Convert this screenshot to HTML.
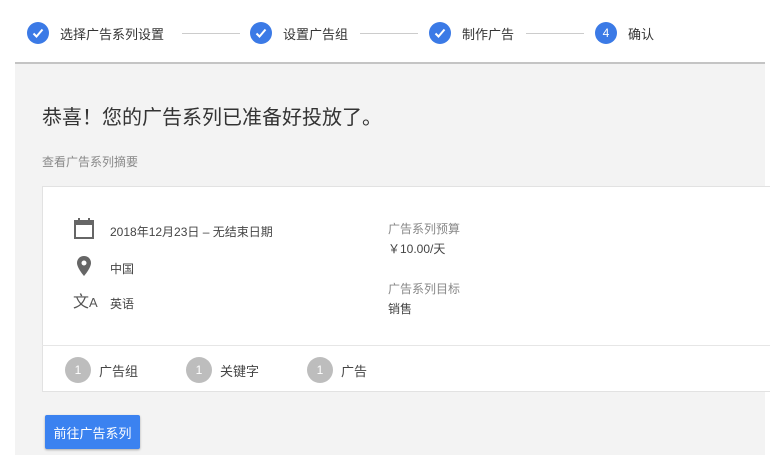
<!DOCTYPE html>
<html><head><meta charset="utf-8"><style>
*{margin:0;padding:0;box-sizing:border-box}
body{width:770px;height:455px;background:#fff;font-family:"Liberation Sans","Noto Sans CJK SC",sans-serif;position:relative;overflow:hidden;color:#333}
.abs{position:absolute}
.step{position:absolute;top:21px;height:24px;display:flex;align-items:center;font-size:13px;color:#333}
.c{width:22px;height:22px;border-radius:50%;background:#3b7ae6;color:#fff;display:flex;align-items:center;justify-content:center;margin-right:11px;font-size:12px}
.line{position:absolute;top:33px;height:1px;background:#ccc}
.main{position:absolute;left:15px;top:62px;width:750px;height:393px;background:#f3f3f3;border-top:2px solid #c4c4c4}
.card{position:absolute;left:42px;top:186px;width:760px;height:206px;background:#fff;border:1px solid #e2e2e2}
.t{position:absolute;font-size:12px;color:#444;white-space:nowrap}
.g{color:#888}
.n{position:absolute;top:357px;width:26px;height:26px;border-radius:50%;background:#bdbdbd;color:#fff;font-size:12px;display:flex;align-items:center;justify-content:center}
.nl{position:absolute;top:361px;font-size:13px;color:#444}
</style></head><body>
<div class="step" style="left:27px"><div class="c"><svg width="14" height="14" viewBox="0 0 14 14"><path d="M2.5 7.5l3 3 6-7" fill="none" stroke="#fff" stroke-width="2"/></svg></div>选择广告系列设置</div>
<div class="line" style="left:182px;width:58px"></div>
<div class="step" style="left:250px"><div class="c"><svg width="14" height="14" viewBox="0 0 14 14"><path d="M2.5 7.5l3 3 6-7" fill="none" stroke="#fff" stroke-width="2"/></svg></div>设置广告组</div>
<div class="line" style="left:360px;width:58px"></div>
<div class="step" style="left:429px"><div class="c"><svg width="14" height="14" viewBox="0 0 14 14"><path d="M2.5 7.5l3 3 6-7" fill="none" stroke="#fff" stroke-width="2"/></svg></div>制作广告</div>
<div class="line" style="left:526px;width:58px"></div>
<div class="step" style="left:595px"><div class="c">4</div>确认</div>
<div class="main"></div>
<div class="abs" style="left:42px;top:101px;font-size:20px;color:#333">恭喜！您的广告系列已准备好投放了。</div>
<div class="abs" style="left:42px;top:153px;font-size:12px;color:#888">查看广告系列摘要</div>
<div class="card"></div>
<div class="abs" style="left:42px;top:345px;width:760px;height:1px;background:#e6e6e6"></div>
<svg class="abs" style="left:73px;top:218px" width="22" height="22" viewBox="0 0 22 22"><rect x="2" y="3" width="18" height="17" fill="none" stroke="#666" stroke-width="2"/><rect x="2" y="3" width="18" height="4" fill="#666"/><rect x="5" y="0" width="2" height="4" fill="#666"/><rect x="15" y="0" width="2" height="4" fill="#666"/></svg>
<div class="t" style="left:110px;top:223px">2018年12月23日 – 无结束日期</div>
<svg class="abs" style="left:77px;top:256px" width="14" height="20" viewBox="0 0 14 20"><path d="M7 0C3 0 0 3 0 7c0 5 7 13 7 13s7-8 7-13c0-4-3-7-7-7z" fill="#666"/><circle cx="7" cy="7" r="2.5" fill="#fff"/></svg>
<div class="t" style="left:110px;top:260px">中国</div>
<div class="abs" style="left:73px;top:288px;font-size:16px;color:#555">文<span style="font-size:13px">A</span></div>
<div class="t" style="left:110px;top:295px">英语</div>
<div class="t g" style="left:388px;top:220px">广告系列预算</div>
<div class="t" style="left:388px;top:240px">￥10.00/天</div>
<div class="t g" style="left:388px;top:280px">广告系列目标</div>
<div class="t" style="left:388px;top:300px">销售</div>
<div class="n" style="left:65px">1</div><div class="nl" style="left:99px">广告组</div>
<div class="n" style="left:186px">1</div><div class="nl" style="left:220px">关键字</div>
<div class="n" style="left:307px">1</div><div class="nl" style="left:341px">广告</div>
<div class="abs" style="left:45px;top:415px;width:95px;height:34px;background:#3b82f0;border-radius:2px;box-shadow:0 1px 2px rgba(0,0,0,.3);color:#fff;font-size:13px;display:flex;align-items:center;justify-content:center">前往广告系列</div>
</body></html>
